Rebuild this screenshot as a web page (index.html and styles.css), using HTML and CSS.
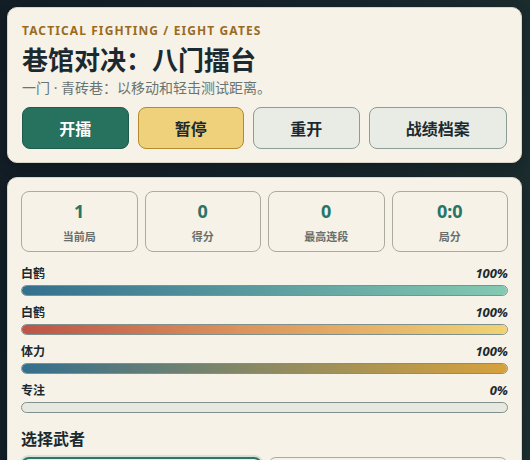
FILE: index.html
```html
<!DOCTYPE html>
<html lang="zh-CN">
<head>
    <meta charset="UTF-8">
    <meta name="viewport" content="width=device-width, initial-scale=1.0">
    <title>巷馆对决：八门擂台</title>
    <link rel="stylesheet" href="styles.css">
</head>
<body>
    <div class="app">
        <header class="panel hero">
            <p class="kicker">Tactical Fighting / Eight Gates</p>
            <h1>巷馆对决：八门擂台</h1>
            <p class="subtitle">一门 · 青砖巷：以移动和轻击测试距离。</p>
            <div class="actions">
                <button class="btn btn-start">开擂</button>
                <button class="btn btn-pause">暂停</button>
                <button class="btn">重开</button>
                <button class="btn">战绩档案</button>
            </div>
        </header>

        <section class="panel board">
            <div class="stats">
                <div class="stat"><span class="stat-value">1</span><span class="stat-label">当前局</span></div>
                <div class="stat"><span class="stat-value">0</span><span class="stat-label">得分</span></div>
                <div class="stat"><span class="stat-value">0</span><span class="stat-label">最高连段</span></div>
                <div class="stat"><span class="stat-value">0:0</span><span class="stat-label">局分</span></div>
            </div>

            <div class="meter">
                <div class="meter-head"><span>白鹤</span><em>100%</em></div>
                <div class="track"><div class="fill fill-player" style="width: 100%"></div></div>
            </div>
            <div class="meter">
                <div class="meter-head"><span>白鹤</span><em>100%</em></div>
                <div class="track"><div class="fill fill-enemy" style="width: 100%"></div></div>
            </div>
            <div class="meter">
                <div class="meter-head"><span>体力</span><em>100%</em></div>
                <div class="track"><div class="fill fill-stamina" style="width: 100%"></div></div>
            </div>
            <div class="meter">
                <div class="meter-head"><span>专注</span><em>0%</em></div>
                <div class="track"><div class="fill fill-focus" style="width: 0%"></div></div>
            </div>

            <h2>选择武者</h2>
            <div class="fighters">
                <div class="fighter selected">白鹤</div>
                <div class="fighter">铁拳</div>
            </div>
        </section>
    </div>
</body>
</html>
```

FILE: styles.css
```css
* {
    margin: 0;
    padding: 0;
    box-sizing: border-box;
}

body {
    font-family: "Noto Sans", "Noto Sans CJK SC", sans-serif;
    background: linear-gradient(100deg, #121d26 0%, #16242c 55%, #1d2f2f 100%);
    color: #1b2a30;
    min-height: 100vh;
}

.app {
    padding: 7px 8px 7px 7px;
    display: flex;
    flex-direction: column;
    gap: 14px;
}

.panel {
    background-color: #f6f2e8;
    border: 1px solid #d9d4c4;
    border-radius: 10px;
    box-shadow: 0 4px 12px rgba(0, 0, 0, 0.25);
}

/* Top panel */
.hero {
    padding: 14px 14px 13px;
}

.kicker {
    font-size: 12px;
    font-weight: 700;
    letter-spacing: 1.1px;
    text-transform: uppercase;
    color: #9a6b1f;
    line-height: 18px;
}

h1 {
    font-family: "Noto Sans CJK SC", sans-serif;
    font-size: 26px;
    font-weight: 700;
    line-height: 37px;
}

.subtitle {
    font-size: 14px;
    color: #6a7472;
    line-height: 20px;
    margin-top: 1px;
}

.actions {
    display: flex;
    gap: 9px;
    margin-top: 9px;
}

.btn {
    flex: 1 1 auto;
    height: 42px;
    padding: 0 20px;
    font-family: "Noto Sans CJK SC", sans-serif;
    font-size: 16px;
    font-weight: 700;
    color: #1b2a30;
    background-color: #e9ece5;
    border: 1px solid #8c9c96;
    border-radius: 8px;
    cursor: pointer;
}

.btn-start {
    background-color: #27715f;
    border-color: #1d5a4b;
    color: #fff;
}

.btn-pause {
    background-color: #efd07b;
    border-color: #b48a2c;
}

/* Board panel */
.board {
    padding: 13px 13px 0 13px;
}

.stats {
    display: grid;
    grid-template-columns: repeat(4, 1fr);
    gap: 7px;
    margin-bottom: 12px;
}

.stat {
    height: 61px;
    border: 1px solid #a9aba1;
    border-radius: 8px;
    display: flex;
    flex-direction: column;
    align-items: center;
    padding-top: 7px;
}

.stat-value {
    font-size: 18px;
    font-weight: 700;
    color: #287466;
    line-height: 24px;
}

.stat-label {
    font-family: "Noto Sans CJK SC", sans-serif;
    font-size: 11px;
    font-weight: 700;
    color: #6a6f6b;
    line-height: 16px;
    margin-top: 5px;
}

.meter {
    margin-bottom: 7px;
}

.meter-head {
    display: flex;
    justify-content: space-between;
    align-items: baseline;
    font-family: "Noto Sans CJK SC", sans-serif;
    font-size: 12px;
    font-weight: 700;
    line-height: 18px;
    margin-bottom: 3px;
}

.meter-head em {
    font-family: "Noto Sans", sans-serif;
    font-size: 13px;
    font-style: italic;
}

.track {
    height: 11px;
    background-color: #e7e8e0;
    border: 1px solid #7f918c;
    border-radius: 6px;
    overflow: hidden;
}

.fill {
    height: 100%;
}

.fill-player {
    background: linear-gradient(90deg, #33708e, #84c9b2);
}

.fill-enemy {
    background: linear-gradient(90deg, #bd5448, #dc935c 45%, #f0d375);
}

.fill-stamina {
    background: linear-gradient(90deg, #336f8e, #8c8a62 50%, #d7a23c);
}

.fill-focus {
    background: #d7a23c;
}

h2 {
    font-family: "Noto Sans CJK SC", sans-serif;
    font-size: 16px;
    font-weight: 700;
    line-height: 22px;
    margin-top: 14px;
    margin-bottom: 8px;
}

.fighters {
    display: grid;
    grid-template-columns: 1fr 1fr;
    gap: 6px;
}

.fighter {
    height: 64px;
    border: 1px solid #a9aba1;
    border-radius: 8px;
    padding: 16px 12px;
    font-family: "Noto Sans CJK SC", sans-serif;
    font-weight: 700;
}

.fighter.selected {
    border: 2px solid #2d7565;
    background-color: #e6eee6;
    box-shadow: 0 0 0 2px rgba(45, 117, 101, 0.15);
}
```
